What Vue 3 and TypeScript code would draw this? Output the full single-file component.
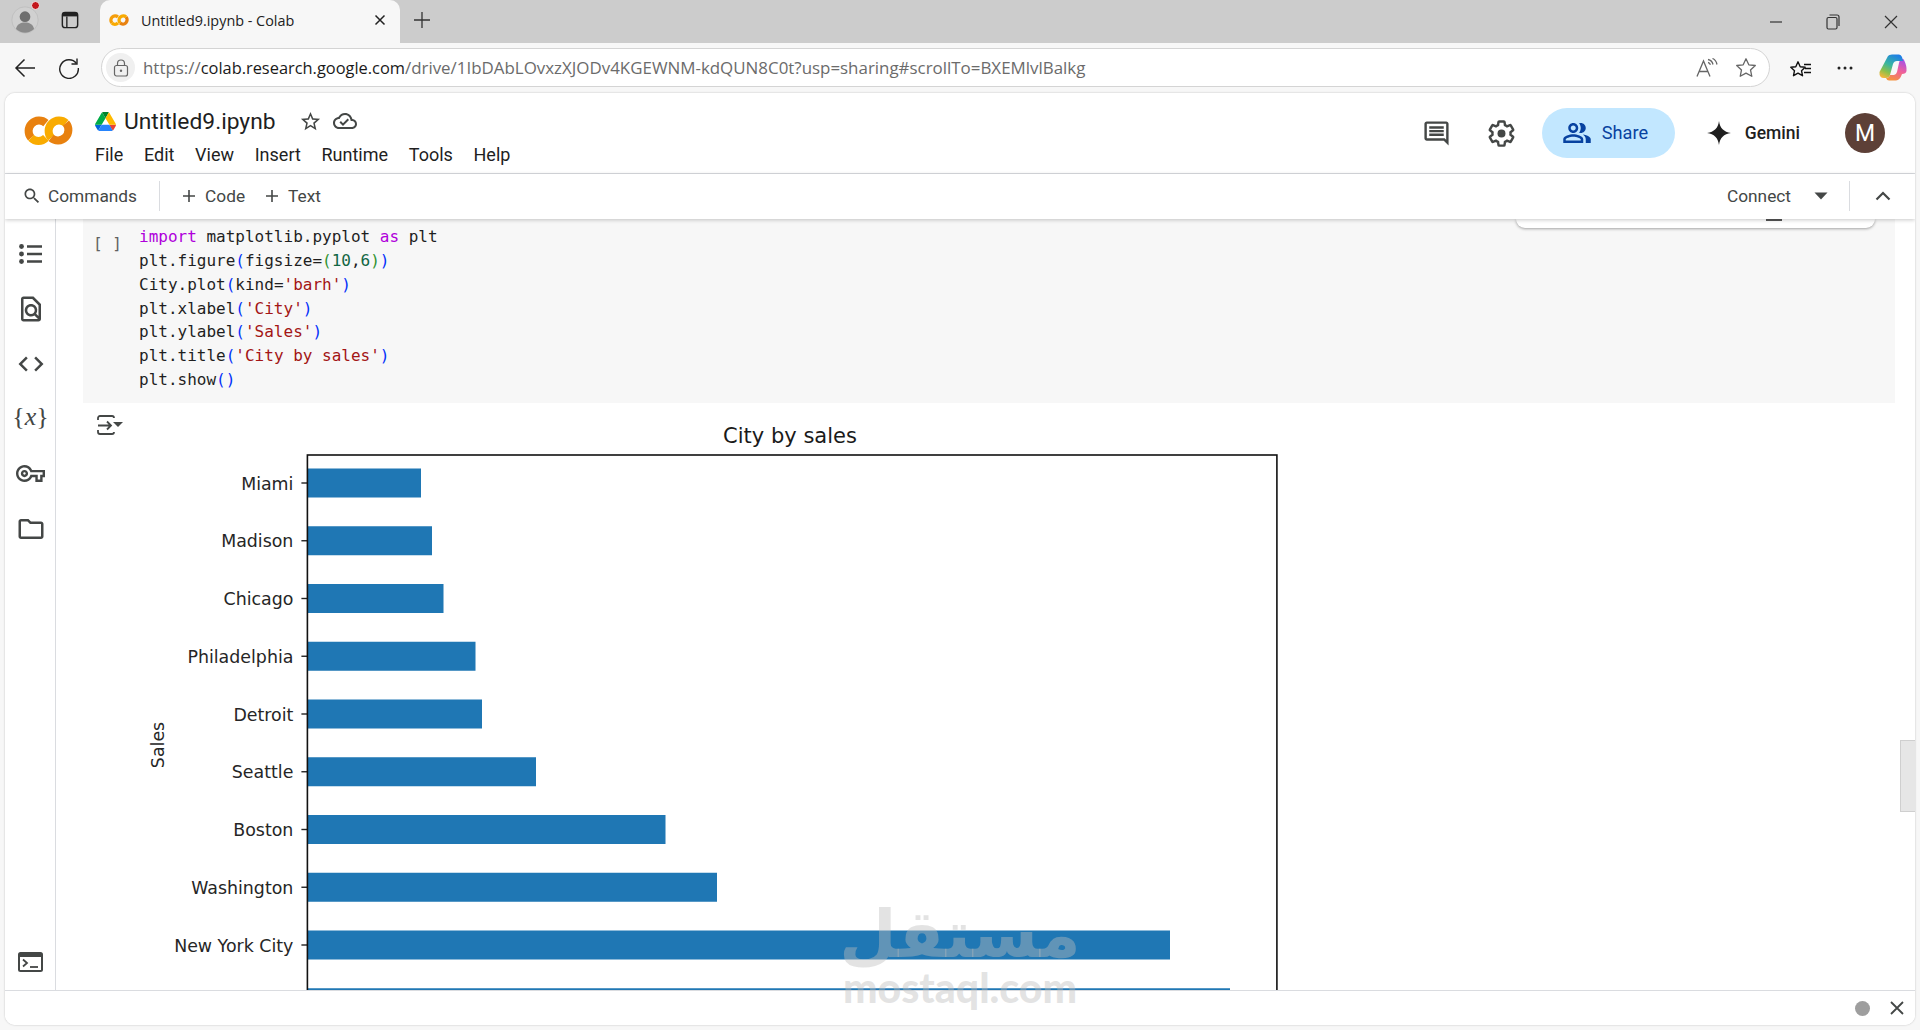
<script setup lang="ts">
type Tok = [string, string]

const menus: string[] = ['File', 'Edit', 'View', 'Insert', 'Runtime', 'Tools', 'Help']

const code: Tok[][] = [
  [['kw', 'import'], ['', ' matplotlib.pyplot '], ['kw', 'as'], ['', ' plt']],
  [['', 'plt.figure'], ['p1', '('], ['', 'figsize='], ['p2', '('], ['num', '10'], ['', ','], ['num', '6'], ['p2', ')'], ['p1', ')']],
  [['', 'City.plot'], ['p1', '('], ['', 'kind='], ['str', "'barh'"], ['p1', ')']],
  [['', 'plt.xlabel'], ['p1', '('], ['str', "'City'"], ['p1', ')']],
  [['', 'plt.ylabel'], ['p1', '('], ['str', "'Sales'"], ['p1', ')']],
  [['', 'plt.title'], ['p1', '('], ['str', "'City by sales'"], ['p1', ')']],
  [['', 'plt.show'], ['p1', '()']],
]

const originX = 122
const originY = 423
const frameLeft = 307.4 - originX
const firstCenter = 483 - originY
const pitch = 57.75

const bars = [
  { name: 'Miami', end: 421 },
  { name: 'Madison', end: 432 },
  { name: 'Chicago', end: 443.5 },
  { name: 'Philadelphia', end: 475.5 },
  { name: 'Detroit', end: 482 },
  { name: 'Seattle', end: 536 },
  { name: 'Boston', end: 665.5 },
  { name: 'Washington', end: 717 },
  { name: 'New York City', end: 1170 },
  { name: '', end: 1230 },
].map((b, i) => ({
  name: b.name,
  cy: firstCenter + i * pitch,
  width: b.end - 307.4,
}))
</script>

<template>
  <div class="window">
    <!-- browser tab strip -->
    <div class="tabstrip">
      <div class="profile">
        <svg width="28" height="28" viewBox="0 0 34 34">
          <circle cx="17" cy="17" r="16" fill="#d0d0d0" stroke="#bdbdbd" />
          <circle cx="17" cy="13" r="6.5" fill="#6e6e6e" />
          <path d="M6 28c1-6 6-8 11-8s10 2 11 8c-3 3-7 4.500-11 4.500S9 31 6 28z" fill="#8a8a8a" />
        </svg>
        <span class="profile-dot"></span>
      </div>
      <svg class="tabs-icon" width="18" height="18" viewBox="0 0 20 20">
        <rect x="1.500" y="1.500" width="17" height="17" rx="3" fill="none" stroke="#222" stroke-width="1.600" />
        <path d="M2 2h16v4H2z" fill="#222" />
        <path d="M6.500 6v12" stroke="#222" stroke-width="1.500" />
      </svg>
      <div class="tab">
        <svg width="20" height="12" viewBox="0 0 49 29">
          <path d="M21.900 7.100A10.500 10.500 0 0 0 7.100 21.900" fill="none" stroke="#f59e0b" stroke-width="8" />
          <path d="M7.100 21.900A10.500 10.500 0 0 0 21.900 21.900" fill="none" stroke="#f9ab00" stroke-width="8" />
          <path d="M27.100 21.900A10.500 10.500 0 0 1 41.900 7.100" fill="none" stroke="#f9ab00" stroke-width="8" />
          <path d="M41.900 7.100A10.500 10.500 0 0 1 27.100 21.900" fill="none" stroke="#e8810f" stroke-width="8" />
        </svg>
        <span class="tab-title">Untitled9.ipynb - Colab</span>
        <svg class="tab-close" width="12" height="12" viewBox="0 0 12 12">
          <path d="M1.500 1.500l9 9M10.500 1.500l-9 9" stroke="#222" stroke-width="1.500" />
        </svg>
      </div>
      <svg class="tab-plus" width="18" height="18" viewBox="0 0 18 18">
        <path d="M9 1v16M1 9h16" stroke="#333" stroke-width="1.300" />
      </svg>
      <div class="winctl">
        <svg width="14" height="14" viewBox="0 0 14 14"><path d="M2 7h12" stroke="#333" stroke-width="1.200" /></svg>
        <svg width="14" height="16" viewBox="0 0 14 16">
          <rect x="1" y="3.500" width="10" height="11.500" rx="1.500" fill="none" stroke="#333" stroke-width="1.200" />
          <path d="M3.500 1h7.500a2 2 0 0 1 2 2v9" fill="none" stroke="#333" stroke-width="1.200" />
        </svg>
        <svg width="14" height="14" viewBox="0 0 14 14"><path d="M1 1l12 12M13 1L1 13" stroke="#333" stroke-width="1.200" /></svg>
      </div>
    </div>

    <!-- browser address bar -->
    <div class="navbar">
      <svg class="nav-back" width="22" height="20" viewBox="0 0 22 20">
        <path d="M21 10H2M10.500 1.500L2 10l8.500 8.500" fill="none" stroke="#222" stroke-width="1.500" />
      </svg>
      <svg class="nav-reload" width="22" height="22" viewBox="0 0 22 22">
        <path d="M18.500 6.500A9.300 9.300 0 1 0 20.300 11" fill="none" stroke="#222" stroke-width="1.400" />
        <path d="M19 1.500v5.500h-5.500" fill="none" stroke="#222" stroke-width="1.400" />
      </svg>
      <div class="urlbar">
        <span class="lock">
          <svg width="16" height="18" viewBox="0 0 16 18">
            <rect x="1.500" y="6.500" width="13" height="10.500" rx="2" fill="none" stroke="#666" stroke-width="1.200" />
            <path d="M4.500 6.500V4.500a3.500 3.500 0 0 1 7 0v2" fill="none" stroke="#666" stroke-width="1.200" />
            <circle cx="8" cy="11.700" r="1.200" fill="#666" />
          </svg>
        </span>
        <span class="url"><span class="dim">https://</span>colab.research.google.com<span class="dim">/drive/1IbDAbLOvxzXJODv4KGEWNM-kdQUN8C0t?usp=sharing#scrollTo=BXEMlvlBalkg</span></span>
        <svg class="read" width="22" height="20" viewBox="0 0 22 20">
          <path d="M1 18.500L7.500 3l6.500 15.500M3.300 13.500h8.400" fill="none" stroke="#666" stroke-width="1.300" />
          <path d="M12 1.500c3 .5 4.500 2.500 5 5M12 4.500c1.500.3 2 1 2.400 2.300M16.500 0.500c2.500 1 4 3.500 4.500 6" fill="none" stroke="#666" stroke-width="1.300" />
        </svg>
        <svg class="fav" width="22" height="22" viewBox="0 0 22 22">
          <path d="M11 1.800l2.800 6 6.500.7-4.800 4.400 1.300 6.400L11 16.100l-5.800 3.200 1.300-6.400L1.700 8.500l6.500-.7z" fill="none" stroke="#666" stroke-width="1.300" stroke-linejoin="round" />
        </svg>
      </div>
      <svg class="collections" width="22" height="22" viewBox="0 0 22 22">
        <path d="M8 1.800l2.200 5 5 .5-3.700 3.400 1 5L8 13.200l-4.500 2.500 1-5L.8 7.300l5-.5z" transform="translate(0 3)" fill="none" stroke="#111" stroke-width="1.400" stroke-linejoin="round" />
        <path d="M14 7.500h7M15 11.500h6M14 15.500h7" stroke="#111" stroke-width="1.300" />
      </svg>
      <svg class="dots" width="16" height="4" viewBox="0 0 16 4">
        <circle cx="2" cy="2" r="1.500" fill="#222" /><circle cx="8" cy="2" r="1.500" fill="#222" /><circle cx="14" cy="2" r="1.500" fill="#222" />
      </svg>
      <svg class="copilot" width="28" height="27" viewBox="0 0 28 27">
        <defs>
          <linearGradient id="cpA" x1="0.700" y1="0" x2="0.200" y2="1">
            <stop offset="0" stop-color="#1f7fe6" /><stop offset="0.450" stop-color="#38b6a0" /><stop offset="0.750" stop-color="#8cc04a" /><stop offset="1" stop-color="#f4b63a" />
          </linearGradient>
          <linearGradient id="cpB" x1="0.700" y1="0" x2="0.300" y2="1">
            <stop offset="0" stop-color="#a44fe8" /><stop offset="0.500" stop-color="#f0609a" /><stop offset="1" stop-color="#f5953c" />
          </linearGradient>
        </defs>
        <path d="M22 5q2-1 3 1q3 6 2.500 11q-.5 3-4.500 3q-2 6-6 6.500H10q-2 0-3-2.500q3 0 4-3h4q2 0 3-3l2-9q.5-3 2-4z" fill="url(#cpB)" />
        <path d="M9 2q1-1.500 4-1.500h7q2 0 3 2.500l1 4h-6q-3 0-4 3l-3 11q-1 3-4 3H5q-5 0-4.500-6z" fill="url(#cpA)" />
      </svg>
    </div>

    <!-- colab page -->
    <div class="page">
      <header class="header">
        <svg class="logo" width="49" height="29" viewBox="0 0 49 29">
          <path d="M21.900 7.100A10.500 10.500 0 0 0 7.100 21.900" fill="none" stroke="#e8810f" stroke-width="8" />
          <path d="M7.100 21.900A10.500 10.500 0 0 0 21.900 21.900" fill="none" stroke="#f9ab00" stroke-width="8" />
          <path d="M27.100 21.900A10.500 10.500 0 0 1 41.900 7.100" fill="none" stroke="#f9ab00" stroke-width="8" />
          <path d="M41.900 7.100A10.500 10.500 0 0 1 27.100 21.900" fill="none" stroke="#e8810f" stroke-width="8" />
        </svg>
        <div class="titlecol">
          <div class="titlerow">
            <svg width="21" height="19" viewBox="0 0 87.300 78">
              <path d="m6.600 66.850 3.850 6.650c.8 1.400 1.950 2.500 3.300 3.300l13.750-23.800h-27.500c0 1.550.4 3.100 1.200 4.500z" fill="#0066da" />
              <path d="m43.650 25-13.750-23.800c-1.350.8-2.500 1.900-3.300 3.300l-25.400 44a9.060 9.060 0 0 0 -1.200 4.500h27.500z" fill="#00ac47" />
              <path d="m73.550 76.800c1.350-.8 2.500-1.900 3.300-3.300l1.600-2.750 7.650-13.250c.8-1.400 1.200-2.950 1.200-4.500h-27.502l5.852 11.500z" fill="#ea4335" />
              <path d="m43.650 25 13.750-23.800c-1.350-.8-2.900-1.200-4.500-1.200h-18.500c-1.600 0-3.150.45-4.500 1.200z" fill="#00832d" />
              <path d="m59.800 53h-32.300l-13.750 23.800c1.350.8 2.900 1.200 4.500 1.200h50.800c1.600 0 3.150-.45 4.500-1.200z" fill="#2684fc" />
              <path d="m73.400 26.500-12.700-22c-.8-1.400-1.950-2.500-3.300-3.300l-13.750 23.800 16.150 28h27.450c0-1.550-.4-3.100-1.200-4.500z" fill="#ffba00" />
            </svg>
            <span class="filename">Untitled9.ipynb</span>
            <svg class="title-star" width="23" height="23" viewBox="0 0 24 24">
              <path d="M22 9.240l-7.190-.62L12 2 9.190 8.630 2 9.240l5.460 4.730L5.820 21 12 17.270 18.180 21l-1.630-7.030L22 9.240zM12 15.400l-3.760 2.270 1-4.280-3.320-2.880 4.380-.38L12 6.100l1.710 4.040 4.380.38-3.320 2.880 1 4.280L12 15.400z" fill="#444746" />
            </svg>
            <svg class="title-cloud" width="24" height="24" viewBox="0 0 24 24">
              <path d="M19.350 10.040C18.670 6.590 15.640 4 12 4 9.110 4 6.600 5.640 5.350 8.040 2.340 8.360 0 10.910 0 14c0 3.310 2.690 6 6 6h13c2.760 0 5-2.240 5-5 0-2.640-2.050-4.780-4.650-4.960zM19 18H6c-2.210 0-4-1.790-4-4 0-2.050 1.530-3.760 3.560-3.970l1.070-.11.500-.95C8.080 7.140 9.940 6 12 6c2.620 0 4.880 1.860 5.390 4.430l.30 1.500 1.530.11c1.560.1 2.780 1.410 2.780 2.960 0 1.650-1.350 3-3 3zm-9-3.820l-2.090-2.090L6.500 13.500 10 17l6.010-6.010-1.410-1.410z" fill="#444746" />
            </svg>
          </div>
          <nav class="menu">
            <span v-for="m in menus" :key="m">{{ m }}</span>
          </nav>
        </div>
        <div class="actions">
          <svg class="act-comment" width="29" height="29" viewBox="0 0 24 24">
            <path d="M21.990 4c0-1.100-.89-2-1.990-2H4c-1.100 0-2 .9-2 2v12c0 1.100.9 2 2 2h14l4 4-.01-18zM20 4v13.170L18.830 16H4V4h16zM6 12h12v2H6zm0-3h12v2H6zm0-3h12v2H6z" fill="#444746" />
          </svg>
          <svg class="act-gear" width="29" height="29" viewBox="0 0 24 24">
            <path d="M19.430 12.980c.04-.32.07-.64.07-.98s-.03-.66-.07-.98l2.110-1.650c.19-.15.24-.42.120-.64l-2-3.460c-.12-.22-.39-.3-.61-.22l-2.490 1c-.52-.4-1.080-.73-1.690-.98l-.38-2.650C14.460 2.180 14.250 2 14 2h-4c-.25 0-.46.18-.49.42l-.38 2.650c-.61.25-1.170.59-1.690.98l-2.490-1c-.23-.09-.49 0-.61.22l-2 3.460c-.13.22-.07.49.12.64l2.110 1.650c-.04.32-.07.65-.07.98s.03.66.07.98l-2.110 1.650c-.19.15-.24.42-.12.64l2 3.460c.12.22.39.3.61.22l2.490-1c.52.4 1.080.73 1.690.98l.38 2.650c.03.24.24.42.49.42h4c.25 0 .46-.18.49-.42l.38-2.650c.61-.25 1.170-.59 1.690-.98l2.490 1c.23.09.49 0 .61-.22l2-3.460c.12-.22.07-.49-.12-.64l-2.110-1.650z" fill="none" stroke="#444746" stroke-width="2" />
            <circle cx="12" cy="12" r="3.300" fill="#444746" />
          </svg>
          <button class="share">
            <svg width="30" height="30" viewBox="0 0 24 24">
              <path d="M16.670 13.130C18.040 14.060 19 15.320 19 17v3h4v-3c0-2.180-3.570-3.470-6.330-3.870z" fill="#0842a0" />
              <path d="M15 12c2.210 0 4-1.790 4-4s-1.790-4-4-4c-.47 0-.91.1-1.330.24C14.500 5.270 15 6.580 15 8s-.5 2.730-1.330 3.760c.42.14.86.24 1.330.24z" fill="#0842a0" />
              <path d="M9 12c2.210 0 4-1.790 4-4s-1.790-4-4-4-4 1.790-4 4 1.790 4 4 4zm0-6c1.100 0 2 .9 2 2s-.9 2-2 2-2-.9-2-2 .9-2 2-2z" fill="#0842a0" />
              <path d="M9 13c-2.670 0-8 1.340-8 4v3h16v-3c0-2.660-5.330-4-8-4zm6 5H3v-.99C3.200 16.290 6.300 15 9 15s5.800 1.290 6 2v1z" fill="#0842a0" />
            </svg>
            <span class="share-lbl">Share</span>
          </button>
          <svg class="gem-star" width="26" height="26" viewBox="0 0 24 24">
            <path d="M12 1C12.800 7.500 16.500 11.200 23 12C16.500 12.800 12.800 16.500 12 23C11.200 16.500 7.500 12.800 1 12C7.500 11.200 11.200 7.500 12 1Z" fill="#1f1f1f" />
          </svg>
          <span class="gemini">Gemini</span>
          <span class="avatar">M</span>
        </div>
      </header>

      <div class="toolbar">
        <svg class="search" width="20" height="20" viewBox="0 0 24 24">
          <path d="M15.500 14h-.79l-.28-.27C15.410 12.590 16 11.110 16 9.500 16 5.910 13.090 3 9.500 3S3 5.910 3 9.500 5.910 16 9.500 16c1.610 0 3.090-.59 4.230-1.570l.27.28v.79l5 4.990L20.490 19l-4.990-5zm-6 0C7.010 14 5 11.990 5 9.500S7.010 5 9.500 5 14 7.010 14 9.500 11.990 14 9.500 14z" fill="#444746" />
        </svg>
        <span class="tb-text">Commands</span>
        <span class="tb-div"></span>
        <svg class="plus-a" width="14" height="14" viewBox="0 0 14 14"><path d="M7 1v12M1 7h12" stroke="#444746" stroke-width="1.600" /></svg>
        <span class="tb-text code-lbl">Code</span>
        <svg class="plus-b" width="14" height="14" viewBox="0 0 14 14"><path d="M7 1v12M1 7h12" stroke="#444746" stroke-width="1.600" /></svg>
        <span class="tb-text text-lbl">Text</span>
        <span class="tb-text connect">Connect</span>
        <svg class="caret" width="14" height="8" viewBox="0 0 14 8"><path d="M0.500 0.500h13L7 7.500z" fill="#444746" /></svg>
        <span class="tb-div div-right"></span>
        <svg class="chev" width="16" height="10" viewBox="0 0 16 10"><path d="M1.500 8.500L8 2l6.500 6.500" fill="none" stroke="#444746" stroke-width="2.200" /></svg>
      </div>

      <div class="body">
        <aside class="sidebar">
          <span class="slot">
            <svg width="24" height="20" viewBox="0 0 24 20">
              <circle cx="2.500" cy="2.500" r="2.400" fill="#444746" /><circle cx="2.500" cy="10" r="2.400" fill="#444746" /><circle cx="2.500" cy="17.500" r="2.400" fill="#444746" />
              <path d="M8 2.500h15M8 10h15M8 17.500h15" stroke="#444746" stroke-width="2.400" />
            </svg>
          </span>
          <span class="slot">
            <svg width="30" height="30" viewBox="0 0 24 24">
              <path d="M14 2H6c-1.100 0-1.990.9-1.990 2L4 20c0 1.100.89 2 1.990 2H18c1.100 0 2-.9 2-2V8l-6-6zM6 4h7l5 5v8.580l-1.840-1.840c1.280-1.940 1.070-4.570-.64-6.280C14.550 8.490 13.280 8 12 8c-1.280 0-2.550.49-3.530 1.460-1.950 1.950-1.950 5.110 0 7.050.97.97 2.250 1.460 3.530 1.460.96 0 1.920-.28 2.750-.83L17.600 20H6V4zm8.110 11.100c-.56.56-1.310.88-2.110.88s-1.550-.31-2.110-.88c-.56-.56-.88-1.310-.88-2.110s.31-1.550.88-2.110c.56-.57 1.310-.88 2.110-.88s1.550.31 2.110.88c.56.56.88 1.310.88 2.110s-.31 1.550-.88 2.110z" fill="#444746" />
            </svg>
          </span>
          <span class="slot">
            <svg width="30" height="30" viewBox="0 0 24 24">
              <path d="M9.400 16.600L4.800 12l4.600-4.600L8 6l-6 6 6 6 1.400-1.400zm5.200 0l4.600-4.600-4.600-4.600L16 6l6 6-6 6-1.400-1.400z" fill="#444746" />
            </svg>
          </span>
          <span class="slot vars"><span>{</span><i>x</i><span>}</span></span>
          <span class="slot">
            <svg width="29" height="29" viewBox="0 0 24 24">
              <path d="M22 19h-6v-4h-2.680c-1.140 2.420-3.600 4-6.320 4-3.860 0-7-3.140-7-7s3.140-7 7-7c2.720 0 5.170 1.580 6.320 4H24v6h-2v4zm-4-2h2v-4h2v-2H11.940l-.23-.67C11.010 8.340 9.110 7 7 7c-2.760 0-5 2.240-5 5s2.240 5 5 5c2.110 0 4.010-1.340 4.710-3.330l.23-.67H18v4zM7 15c-1.650 0-3-1.350-3-3s1.350-3 3-3 3 1.350 3 3-1.350 3-3 3zm0-4c-.55 0-1 .45-1 1s.45 1 1 1 1-.45 1-1-.45-1-1-1z" fill="#444746" />
            </svg>
          </span>
          <span class="slot">
            <svg width="30" height="30" viewBox="0 0 24 24">
              <path d="M9.170 6l2 2H20v10H4V6h5.170M10 4H4c-1.100 0-1.990.9-1.990 2L2 18c0 1.100.9 2 2 2h16c1.100 0 2-.9 2-2V8c0-1.100-.9-2-2-2h-8l-2-2z" fill="#444746" />
            </svg>
          </span>
          <span class="slot terminal">
            <svg width="25" height="20" viewBox="0 0 25 20">
              <rect x="0" y="0" width="25" height="20" rx="2.500" fill="#444746" />
              <rect x="2" y="5" width="21" height="13" fill="#fff" />
              <path d="M5 7.500L9 11l-4 3.500" fill="none" stroke="#444746" stroke-width="1.800" />
              <path d="M12 15h8" stroke="#444746" stroke-width="1.800" />
            </svg>
          </span>
        </aside>

        <main class="content">
          <section class="cell">
            <span class="bracket">[ ]</span>
            <pre class="code"><template v-for="(line, i) in code" :key="i"><span class="line"><span v-for="(t, j) in line" :key="j" :class="t[0]">{{ t[1] }}</span></span></template></pre>
          </section>
          <section class="output">
            <svg class="out-icon" width="28" height="20" viewBox="0 0 28 20">
              <path d="M2 5V3a2 2 0 0 1 2-2h12a2 2 0 0 1 2 2M2 15v2a2 2 0 0 0 2 2h12a2 2 0 0 0 2-2" fill="none" stroke="#444746" stroke-width="1.800" />
              <path d="M2 10.500h13M11 6.500l4 4-4 4" fill="none" stroke="#444746" stroke-width="1.800" />
              <path d="M17 7h10l-5 5z" fill="#444746" />
            </svg>
            <svg class="chart" width="1170" height="600" viewBox="0 0 1170 600">
              <text class="chart-title" x="668" y="20" text-anchor="middle">City by sales</text>
              <text class="chart-label" transform="translate(42 322) rotate(-90)" text-anchor="middle">Sales</text>
              <g v-for="b in bars" :key="b.name">
                <rect :x="frameLeft" :y="b.cy - 14.500" :width="b.width" height="29" fill="#1f77b4" />
                <template v-if="b.name">
                  <line :x1="frameLeft - 6" :x2="frameLeft" :y1="b.cy" :y2="b.cy" stroke="#222" stroke-width="1.400" />
                  <text class="chart-label" :x="frameLeft - 14" :y="b.cy + 6.500" text-anchor="end">{{ b.name }}</text>
                </template>
              </g>
              <rect :x="frameLeft" y="32" width="969.500" height="600" fill="none" stroke="#111" stroke-width="1.600" />
            </svg>
          </section>
        </main>

        <div class="float-panel"><span class="float-mark"></span></div>
        <div class="thumb"></div>
      </div>

      <footer class="status">
        <span class="status-dot"></span>
        <svg width="14" height="14" viewBox="0 0 14 14"><path d="M1 1l12 12M13 1L1 13" stroke="#444746" stroke-width="1.800" /></svg>
      </footer>
    </div>

    <div class="watermark" aria-hidden="true">
      <span class="wm-ar">مستقل</span>
      <span class="wm-en">mostaql.com</span>
    </div>
  </div>
</template>

<style>
html,
body {
  margin: 0;
  background: #f7f7f7;
}
</style>

<style scoped>
.window {
  position: relative;
  width: 1920px;
  height: 1030px;
  display: flex;
  flex-direction: column;
  background: #f7f7f7;
  overflow: hidden;
  font-family: Roboto, "Liberation Sans", sans-serif;
}

/* tab strip */
.tabstrip {
  height: 43px;
  flex: none;
  display: flex;
  align-items: center;
  background: #cccccc;
}
.profile {
  position: relative;
  width: 28px;
  height: 28px;
  margin: 0 0 3px 11px;
}
.profile-dot {
  position: absolute;
  left: 20px;
  top: -5px;
  width: 7px;
  height: 7px;
  border-radius: 50%;
  background: #c4161c;
  border: 1.500px solid #eee;
}
.tabs-icon {
  margin: 0 0 3px 22px;
}
.tab {
  width: 300px;
  height: 43px;
  margin-left: 21px;
  display: flex;
  align-items: center;
  background: #f7f7f7;
  border-radius: 10px 10px 0 0;
  box-sizing: border-box;
  padding: 0 0 3px 9px;
}
.tab-title {
  margin-left: 12px;
  font-family: "Open Sans", sans-serif;
  font-size: 14.400px;
  color: #222;
  white-space: nowrap;
}
.tab-close {
  margin-left: auto;
  margin-right: 14px;
}
.tab-plus {
  margin: 0 0 3px 13px;
}
.winctl {
  margin-left: auto;
  display: flex;
  align-items: center;
  gap: 44px;
  padding-right: 22px;
}

/* address bar */
.navbar {
  height: 50px;
  flex: none;
  display: flex;
  align-items: center;
  box-sizing: border-box;
  padding-bottom: 1px;
}
.nav-back {
  margin-left: 14px;
}
.nav-reload {
  margin-left: 22px;
}
.urlbar {
  width: 1669px;
  height: 39px;
  margin-left: 21px;
  box-sizing: border-box;
  display: flex;
  align-items: center;
  background: #fff;
  border: 1.500px solid #d4d4d4;
  border-radius: 20px;
}
.lock {
  width: 29px;
  height: 29px;
  margin-left: 4px;
  border-radius: 50%;
  background: #f0f0f0;
  display: flex;
  align-items: center;
  justify-content: center;
}
.url {
  margin-left: 8px;
  font-family: "Open Sans", sans-serif;
  font-size: 16.400px;
  color: #1a1a1a;
  white-space: nowrap;
}
.dim {
  color: #6b6b6b;
  font-size: 16.920px;
}
.read {
  margin-left: auto;
}
.fav {
  margin-left: 17px;
  margin-right: 12px;
}
.collections {
  margin-left: 20px;
}
.dots {
  margin-left: 25px;
}
.copilot {
  margin-left: 26px;
}

/* page */
.page {
  flex: 1;
  min-height: 0;
  margin: 0 5px 5px 5px;
  display: flex;
  flex-direction: column;
  background: #fff;
  border-radius: 10px;
  box-shadow: 0 0 2px rgba(0, 0, 0, 0.25);
  overflow: hidden;
}
.header {
  height: 81px;
  flex: none;
  box-sizing: border-box;
  display: flex;
  align-items: flex-start;
  border-bottom: 1px solid #dadce0;
  padding-left: 19px;
  background: #fff;
}
.logo {
  margin-top: 23px;
}
.titlecol {
  margin-left: 22px;
  color: #1f1f1f;
}
.titlerow {
  height: 28px;
  margin-top: 14px;
  display: flex;
  align-items: center;
}
.filename {
  margin-left: 8px;
  font-size: 22.800px;
  white-space: nowrap;
}
.title-star {
  margin-left: 23px;
}
.title-cloud {
  margin-left: 11px;
}
.menu {
  display: flex;
  gap: 20.700px;
  margin-top: 8px;
  font-size: 18px;
  line-height: 24px;
}
.actions {
  margin-left: auto;
  height: 80px;
  display: flex;
  align-items: center;
  padding-right: 30px;
}
.act-gear {
  margin-left: 36px;
}
.share {
  width: 133px;
  height: 50px;
  margin-left: 26px;
  border: 0;
  border-radius: 25px;
  padding: 0 0 0 20px;
  display: flex;
  align-items: center;
  gap: 10px;
  background: #c2e7ff;
  color: #0842a0;
  font-family: inherit;
  font-size: 18.200px;
  font-weight: 400;
}
.share-lbl {
  margin-bottom: 2px;
}
.gem-star {
  margin-left: 31px;
}
.gemini {
  margin-left: 13px;
  font-size: 17.500px;
  font-weight: 500;
  color: #1f1f1f;
}
.avatar {
  width: 40px;
  height: 40px;
  margin-left: 45px;
  border-radius: 50%;
  background: #5d4037;
  color: #fff;
  font-size: 23px;
  display: flex;
  align-items: center;
  justify-content: center;
}

/* toolbar */
.toolbar {
  position: relative;
  z-index: 2;
  height: 45px;
  flex: none;
  box-sizing: border-box;
  padding-bottom: 2px;
  display: flex;
  align-items: center;
  background: #fff;
  box-shadow: 0 1px 4px rgba(0, 0, 0, 0.22);
}
.search {
  margin-left: 17px;
}
.tb-text {
  font-size: 17.300px;
  color: #444746;
  white-space: nowrap;
}
.search + .tb-text {
  margin-left: 6px;
}
.tb-div {
  width: 1px;
  height: 30px;
  background: #dadce0;
  margin-left: 22px;
}
.plus-a {
  margin-left: 22px;
}
.code-lbl {
  margin-left: 9px;
}
.plus-b {
  margin-left: 20px;
}
.text-lbl {
  margin-left: 9px;
}
.connect {
  margin-left: auto;
}
.caret {
  margin-left: 23px;
}
.div-right {
  margin-left: 21px;
}
.chev {
  margin-left: 25px;
  margin-right: 24px;
}

/* body */
.body {
  position: relative;
  flex: 1;
  min-height: 0;
  display: flex;
  overflow: hidden;
}
.sidebar {
  width: 51px;
  flex: none;
  box-sizing: border-box;
  border-right: 1px solid #dadce0;
  display: flex;
  flex-direction: column;
  align-items: center;
  padding: 7px 0 0 1px;
}
.slot {
  height: 55.100px;
  flex: none;
  display: flex;
  align-items: center;
  justify-content: center;
}
.vars {
  box-sizing: border-box;
  padding-bottom: 3px;
  font-family: "Liberation Serif", serif;
  font-size: 26px;
  color: #444746;
}
.terminal {
  margin-top: auto;
  padding-bottom: 0;
}
.content {
  flex: 1;
  min-width: 0;
}
.cell {
  height: 184px;
  margin: 0 20px 0 27px;
  background: #f7f7f7;
  display: flex;
  box-sizing: border-box;
}
.bracket {
  margin: 13px 0 0 10px;
  width: 46px;
  flex: none;
  font-family: "DejaVu Sans Mono", monospace;
  font-size: 16px;
  line-height: 24px;
  color: #616161;
  white-space: pre;
}
.code {
  margin: 6px 0 0 0;
  font-family: "DejaVu Sans Mono", monospace;
  font-size: 16px;
  line-height: 23.850px;
  color: #1f1f1f;
}
.line {
  display: block;
}
.kw {
  color: #af00db;
}
.str {
  color: #a31515;
}
.num {
  color: #116644;
}
.p1 {
  color: #0431fa;
}
.p2 {
  color: #319331;
}
.output {
  display: flex;
  padding-left: 40px;
}
.out-icon {
  margin-top: 12px;
  flex: none;
}
.chart {
  flex: none;
  margin-top: 20px;
  margin-left: -2px;
}
.chart-title {
  font-family: "DejaVu Sans", sans-serif;
  font-size: 21px;
  fill: #1a1a1a;
}
.chart-label {
  font-family: "DejaVu Sans", sans-serif;
  font-size: 17.400px;
  fill: #262626;
}
.float-panel {
  position: absolute;
  top: 0;
  left: 1511px;
  width: 359px;
  height: 9px;
  background: #fff;
  border-radius: 0 0 10px 10px;
  box-shadow: 0 1px 3px rgba(0, 0, 0, 0.35);
}
.float-mark {
  position: absolute;
  left: 250px;
  top: 0;
  width: 16px;
  height: 1.500px;
  background: #555;
}
.thumb {
  position: absolute;
  top: 521px;
  right: 0;
  width: 14px;
  height: 70px;
  background: #e6e6e6;
  border: 1px solid #cfcfcf;
  border-right: 0;
}

/* status bar */
.status {
  height: 35px;
  flex: none;
  box-sizing: border-box;
  border-top: 1px solid #dadce0;
  display: flex;
  align-items: center;
  justify-content: flex-end;
  gap: 20px;
  padding-right: 11px;
  background: #fff;
}
.status-dot {
  width: 15px;
  height: 15px;
  border-radius: 50%;
  background: #9e9e9e;
}

/* watermark over the page */
.watermark {
  position: absolute;
  left: 845px;
  top: 897px;
  width: 230px;
  display: flex;
  flex-direction: column;
  align-items: center;
  color: rgba(188, 188, 188, 0.42);
  pointer-events: none;
}
.wm-ar {
  height: 76px;
  font-family: "DejaVu Sans", sans-serif;
  font-weight: 700;
  font-size: 66px;
  line-height: 76px;
  white-space: nowrap;
}
.wm-en {
  margin-top: -3px;
  font-family: Lato, sans-serif;
  font-weight: 900;
  font-size: 41px;
  line-height: 36px;
  white-space: nowrap;
}
</style>
